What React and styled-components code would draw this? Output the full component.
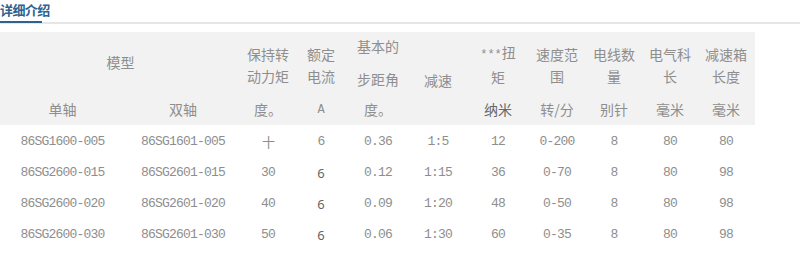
import React from "react";
import styled, { createGlobalStyle } from "styled-components";

const Global = createGlobalStyle`
  html, body { margin: 0; padding: 0; background: #fff; }
  body { font-family: "Noto Sans CJK SC", "Noto Sans", sans-serif; }
`;

const Page = styled.div`
  width: 800px;
  height: 273px;
  overflow: hidden;
  background: #fff;
`;

const TabBar = styled.div`
  display: flex;
  border-bottom: 2px solid #e6e6e6;
  height: 22px;
`;

const Tab = styled.div`
  font-size: 13px;
  font-weight: 700;
  color: #2c6390;
  line-height: 22px;
  width: 42px;
  white-space: nowrap;
  border-bottom: 2px solid #2c6390;
  margin-bottom: -2px;
  letter-spacing: -0.6px;
  position: relative;
  top: -1px;
`;

const Table = styled.table`
  margin-top: 8px;
  width: 755px;
  border-collapse: collapse;
  table-layout: fixed;
`;

const Head = styled.thead`
  background: #f2f2f2;
`;

const HeadRow = styled.tr`
  height: ${(p) => p.$h}px;
`;

const Th = styled.th`
  font-weight: 400;
  font-size: 14px;
  color: #8e8e8e;
  text-align: center;
  vertical-align: ${(p) => p.$valign || "middle"};
  padding: ${(p) => p.$pt || 0}px 0 ${(p) => p.$pb || 0}px 0;
  line-height: 22px;
`;

const Line = styled.div`
  display: block;
  line-height: 22px;
  margin-top: ${(p) => p.$gap || 0}px;
`;

const Unit = styled.span`
  color: ${(p) => (p.$dark ? "#666" : "#8e8e8e")};
  font-family: ${(p) =>
    p.$mono ? '"Liberation Mono", monospace' : '"Noto Sans CJK SC", sans-serif'};
  font-size: ${(p) => (p.$mono ? 12 : 14)}px;
`;

const Row = styled.tr`
  height: ${(p) => p.$h}px;
`;

const Td = styled.td`
  text-align: center;
  vertical-align: middle;
  font-family: ${(p) =>
    p.$sans
      ? '"Noto Sans", "Noto Sans CJK SC", sans-serif'
      : '"Liberation Mono", "Noto Sans CJK SC", monospace'};
  font-size: 13px;
  letter-spacing: ${(p) => (p.$sans ? 0 : -0.8)}px;
  color: ${(p) => (p.$sans ? "#666" : "#8e8e8e")};
  padding: 0;
  white-space: nowrap;
`;

const widths = [125, 116, 54, 52, 62, 58, 62, 56, 58, 54, 58];

const rows = [
  ["86SG1600-005", "86SG1601-005", "十", "6", "0.36", "1:5", "12", "0-200", "8", "80", "80"],
  ["86SG2600-015", "86SG2601-015", "30", "6", "0.12", "1:15", "36", "0-70", "8", "80", "98"],
  ["86SG2600-020", "86SG2601-020", "40", "6", "0.09", "1:20", "48", "0-50", "8", "80", "98"],
  ["86SG2600-030", "86SG2601-030", "50", "6", "0.06", "1:30", "60", "0-35", "8", "80", "98"],
];

const twoLine = [
  ["保持转", "动力矩"],
  ["额定", "电流"],
];

const twoLineRight = [
  ["速度范", "围"],
  ["电线数", "量"],
  ["电气科", "长"],
  ["减速箱", "长度"],
];

export default function App() {
  return (
    <Page>
      <Global />
      <TabBar>
        <Tab>详细介绍</Tab>
      </TabBar>
      <Table>
        <colgroup>
          {widths.map((w, i) => (
            <col key={i} style={{ width: w }} />
          ))}
        </colgroup>
        <Head>
          <HeadRow $h={60}>
            <Th colSpan={2}>模型</Th>
            {twoLine.map(([a, b]) => (
              <Th key={a} $pt={5}>
                <Line>{a}</Line>
                <Line>{b}</Line>
              </Th>
            ))}
            <Th>
              <Line>基本的</Line>
              <Line $gap={11}>步距角</Line>
            </Th>
            <Th $valign="bottom" $pb={1}>
              减速
            </Th>
            <Th $pt={5}>
              <Line>
                <Unit $mono>***</Unit>扭
              </Line>
              <Line>矩</Line>
            </Th>
            {twoLineRight.map(([a, b]) => (
              <Th key={a} $pt={5}>
                <Line>{a}</Line>
                <Line>{b}</Line>
              </Th>
            ))}
          </HeadRow>
          <HeadRow $h={33}>
            <Th>单轴</Th>
            <Th>双轴</Th>
            <Th>度。</Th>
            <Th>
              <Unit $mono>A</Unit>
            </Th>
            <Th>度。</Th>
            <Th></Th>
            <Th>
              <Unit $dark>纳米</Unit>
            </Th>
            <Th>转/分</Th>
            <Th>别针</Th>
            <Th>毫米</Th>
            <Th>毫米</Th>
          </HeadRow>
        </Head>
        <tbody>
          {rows.map((r, ri) => (
            <Row key={ri} $h={ri === 0 ? 32 : 31}>
              {r.map((c, ci) => (
                <Td key={ci} $sans={ci === 3 && ri > 0}>
                  {c}
                </Td>
              ))}
            </Row>
          ))}
        </tbody>
      </Table>
    </Page>
  );
}
